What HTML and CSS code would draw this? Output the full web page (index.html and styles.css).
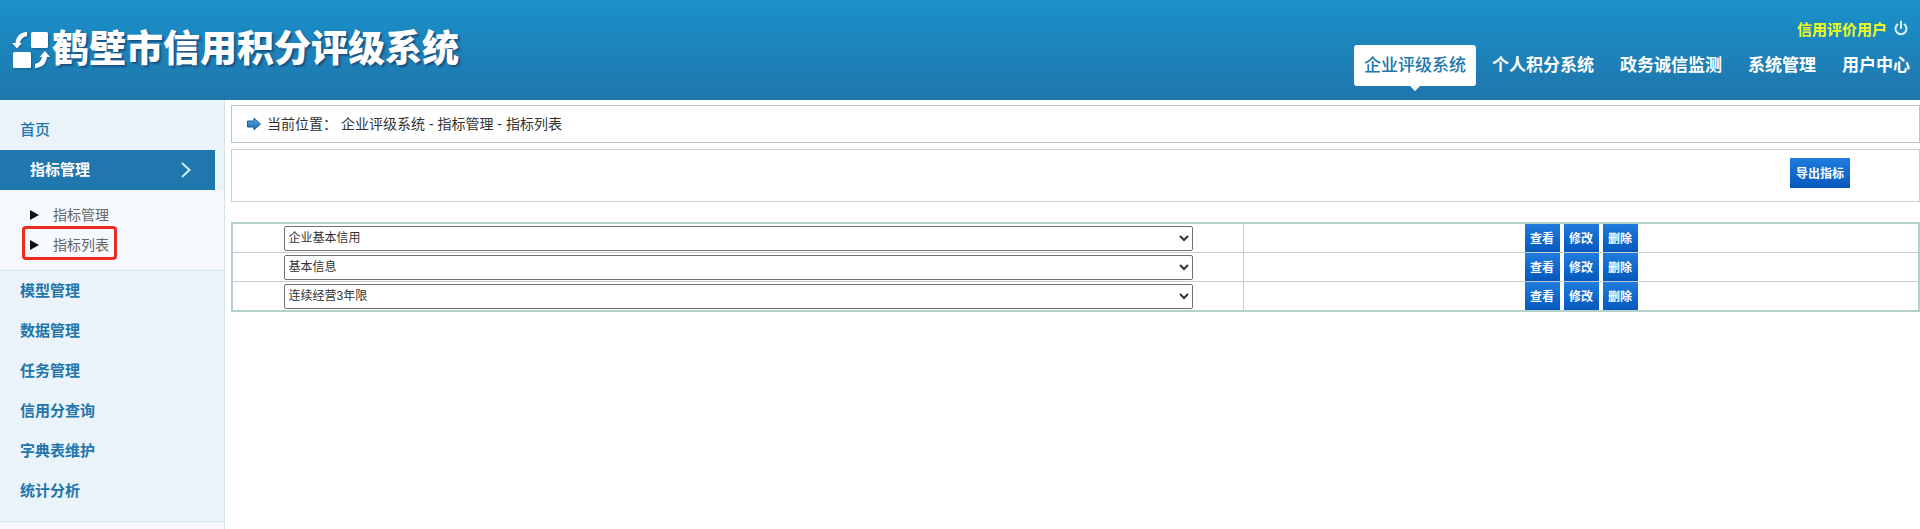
FILE: index.html
```html
<!DOCTYPE html>
<html lang="zh-CN">
<head>
<meta charset="utf-8">
<title>鹤壁市信用积分评级系统</title>
<link rel="stylesheet" href="styles.css">
</head>
<body>
<header class="header">
  <div class="brand">
    <svg class="logo" viewBox="0 0 38 38" width="38" height="38" aria-hidden="true">
      <g fill="#fff">
        <rect x="19" y="1" width="17" height="16" rx="1.5"/>
        <rect x="1" y="21" width="18" height="16" rx="1.5"/>
        <path d="M15 1v4C11 6 9 8 8 12h2L5 17.500 0 12h3.500C4.500 5 8 1.500 15 1z"/>
        <path d="M23 37v-4c4-1 6-3 7-7h-2.500l5.500-6 5 6h-3c-1 7-5 10.500-12 11z"/>
      </g>
    </svg>
    <h1 class="title">鹤壁市信用积分评级系统</h1>
  </div>
  <div class="header-side">
    <div class="user">
      <span>信用评价用户</span>
      <button class="power" type="button" aria-label="退出">
        <svg viewBox="0 0 14 16" width="14" height="16" fill="none" stroke="#dff0fb" stroke-width="2" stroke-linecap="round" aria-hidden="true">
          <path d="M7 1.500v6.500M3.500 4.500a5.500 5.500 0 1 0 7 0"/>
        </svg>
      </button>
    </div>
    <nav class="topnav">
      <a class="topnav-link is-active" href="#">企业评级系统</a>
      <a class="topnav-link" href="#">个人积分系统</a>
      <a class="topnav-link" href="#">政务诚信监测</a>
      <a class="topnav-link" href="#">系统管理</a>
      <a class="topnav-link" href="#">用户中心</a>
    </nav>
  </div>
</header>
<div class="layout">
  <aside class="sidebar">
    <nav class="menu">
      <a class="menu-link is-home" href="#">首页</a>
      <a class="menu-link is-open" href="#">指标管理
        <svg viewBox="0 0 10 16" width="10" height="16" fill="none" stroke="#d5ebf8" stroke-width="2" aria-hidden="true"><path d="M1 1l7.500 7L1 15"/></svg>
      </a>
      <div class="submenu">
        <a class="submenu-link" href="#">指标管理</a>
        <a class="submenu-link is-marked" href="#">指标列表</a>
      </div>
      <a class="menu-link" href="#">模型管理</a>
      <a class="menu-link" href="#">数据管理</a>
      <a class="menu-link" href="#">任务管理</a>
      <a class="menu-link" href="#">信用分查询</a>
      <a class="menu-link" href="#">字典表维护</a>
      <a class="menu-link" href="#">统计分析</a>
    </nav>
  </aside>
  <main class="main">
    <div class="crumbs">
      <svg viewBox="0 0 14 14" width="14" height="14" aria-hidden="true">
        <defs><linearGradient id="arrow" x1="0" y1="0" x2="0" y2="1"><stop offset="0" stop-color="#5bb2e6"/><stop offset="1" stop-color="#1565a8"/></linearGradient></defs>
        <path d="M.5 4H7V1l6.500 6L7 13v-3H.5z" fill="url(#arrow)" stroke="#1c5f98"/>
      </svg>
      <span>当前位置：</span>
      <span>企业评级系统 - 指标管理 - 指标列表</span>
    </div>
    <div class="toolbar"><button class="btn btn-export" type="button">导出指标</button></div>
    <table class="grid">
      <tbody>
        <tr>
          <td class="cell-name"><select class="pick" aria-label="一级指标"><option>企业基本信用</option></select></td>
          <td><div class="actions"><button class="btn" type="button">查看</button><button class="btn" type="button">修改</button><button class="btn" type="button">删除</button></div></td>
        </tr>
        <tr>
          <td class="cell-name"><select class="pick" aria-label="二级指标"><option>基本信息</option></select></td>
          <td><div class="actions"><button class="btn" type="button">查看</button><button class="btn" type="button">修改</button><button class="btn" type="button">删除</button></div></td>
        </tr>
        <tr>
          <td class="cell-name"><select class="pick" aria-label="三级指标"><option>连续经营3年限</option></select></td>
          <td><div class="actions"><button class="btn" type="button">查看</button><button class="btn" type="button">修改</button><button class="btn" type="button">删除</button></div></td>
        </tr>
      </tbody>
    </table>
  </main>
</div>
</body>
</html>
```
FILE: styles.css
```css
*, *::before, *::after { box-sizing: border-box; }
body {
  margin: 0;
  min-height: 100vh;
  display: flex;
  flex-direction: column;
  background: #fff;
  color: #333;
  font: 14px/20px "Liberation Sans", "Noto Sans CJK SC", sans-serif;
}
a { text-decoration: none; color: inherit; }
button, select { font-family: inherit; }

.header {
  display: flex;
  justify-content: space-between;
  height: 100px;
  background: linear-gradient(#1a91ca, #1f76ac);
}
.brand { display: flex; align-items: center; gap: 2px; padding: 0 0 1px 12px; }
.logo { filter: drop-shadow(1px 1px 1px #1b5f90); }
.title {
  margin: 0;
  color: #fff;
  font-size: 37px;
  line-height: 40px;
  font-weight: 900;
  text-shadow: 2px 2px 2px #1b5080;
}
.header-side {
  display: flex;
  flex-direction: column;
  align-items: flex-end;
  padding-top: 20px;
}
.user {
  display: flex;
  gap: 7px;
  height: 25px;
  padding-right: 12px;
  color: #f2ff1a;
  font-size: 15px;
  font-weight: 700;
}
.power { display: flex; padding: 0; border: 0; background: none; height: 16px; }
.topnav { display: flex; gap: 6px; }
.topnav-link {
  position: relative;
  padding: 0 10px;
  border-radius: 3px;
  color: #fff;
  font-size: 17px;
  line-height: 41px;
  font-weight: 700;
}
.topnav-link.is-active { background: #fff; color: #2276ac; font-weight: 500; }
.topnav-link.is-active::after {
  content: "";
  position: absolute;
  left: 50%;
  top: 100%;
  margin-left: -5px;
  border: 5px solid transparent;
  border-top-color: #fff;
  border-bottom: 0;
}

.layout { display: flex; flex: 1; }
.sidebar { width: 225px; background: #f5f9fd; border-right: 1px solid #d5e3ec; }
.menu { padding: 10px 0; background: #eaf2fa; border-bottom: 1px solid #d5e3ec; }
.menu-link {
  display: flex;
  align-items: center;
  padding-left: 20px;
  height: 40px;
  color: #2276ac;
  font-size: 15px;
  font-weight: 700;
}
.menu-link.is-home { font-weight: 500; }
.menu-link.is-open {
  justify-content: space-between;
  margin-right: 9px;
  padding: 0 24px 0 30px;
  background: #1f77ae;
  color: #fff;
}
.submenu { padding: 10px 0; background: #f5f9fd; border-bottom: 1px solid #d5e3ec; }
.submenu-link {
  position: relative;
  display: flex;
  align-items: center;
  gap: 14px;
  padding-left: 30px;
  height: 30px;
  color: #666;
}
.submenu-link::before {
  content: "";
  border: 5px solid transparent;
  border-left: 9px solid #111;
  border-right: 0;
}
.submenu-link.is-marked::after {
  content: "";
  position: absolute;
  left: 22px;
  top: -4px;
  width: 95px;
  height: 34px;
  border: 3px solid #ee2a20;
  border-radius: 4px;
}

.main { flex: 1; padding: 5px 0 0 6px; }
.crumbs {
  display: flex;
  align-items: center;
  height: 38px;
  padding-left: 15px;
  border: 1px solid #b9c9ca;
}
.crumbs svg { margin-right: 6px; }
.crumbs span + span { margin-left: 4px; }
.toolbar {
  display: flex;
  justify-content: flex-end;
  margin: 6px 0 20px;
  padding: 8px 69px 13px;
  border: 1px solid #cccfd3;
}
.btn {
  width: 35px;
  height: 28px;
  padding: 0 0 2px;
  border: 0;
  background: linear-gradient(#1f7cdd, #0558bb);
  color: #fff;
  font-size: 12px;
  font-weight: 700;
}
.btn-export { width: 60px; height: 30px; }

.grid {
  width: 100%;
  table-layout: fixed;
  border: 2px solid #b5d0ca;
  border-spacing: 0;
}
.grid td { height: 28px; padding: 0; }
.grid tr + tr td { border-top: 1px solid #c3ccd0; }
.grid .cell-name { width: 60%; border-right: 1px solid #c3ccd0; text-align: center; }
.pick {
  display: block;
  width: 90%;
  height: 25px;
  margin: 0 auto;
  padding: 0;
  border: 1px solid #707070;
  border-radius: 2px;
  background: #fff;
  color: #333;
  font-size: 12px;
}
.actions { display: flex; justify-content: center; gap: 4px; }
```
